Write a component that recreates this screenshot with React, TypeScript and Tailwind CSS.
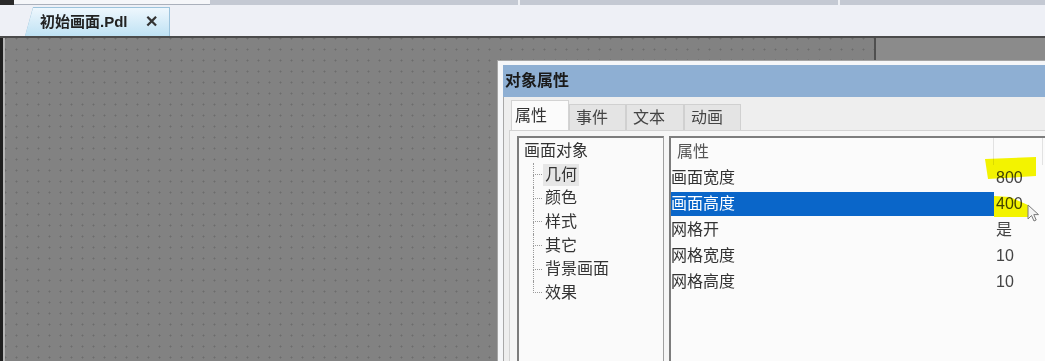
const treeItems = ['几何', '颜色', '样式', '其它', '背景画面', '效果']

const props = [
  { name: '画面宽度', value: '800' },
  { name: '画面高度', value: '400', selected: true },
  { name: '网格开', value: '是' },
  { name: '网格宽度', value: '10' },
  { name: '网格高度', value: '10' },
]

const tabs = [
  { label: '属性', w: 'w-[58px]' },
  { label: '事件', w: 'w-[57px]' },
  { label: '文本', w: 'w-[58px]' },
  { label: '动画', w: 'w-[57px]' },
]

export default function App() {
  return (
    <div className="relative w-[1045px] h-[361px] overflow-hidden flex flex-col bg-[#8a8a8a] font-['Liberation_Sans','Noto_Sans_CJK_SC',sans-serif] text-[#333]">
      {/* top strip */}
      <div className="h-[5px] shrink-0 flex bg-[#c4c9d3]">
        <div className="w-[14px] bg-[#2a2a2a]" />
        <div className="w-[196px] bg-[#f5f6f9] border-b border-[#aab0bb]" />
        <div className="w-[310px] border-r-2 border-[#eef0f4]" />
        <div className="w-[320px] border-r-2 border-[#eef0f4]" />
      </div>

      {/* document tabs */}
      <div className="h-[31px] shrink-0 flex items-end pl-[25px] bg-[#eef0f6]">
        <div className="h-[29px] w-[145px] bg-[#9cc3dc] [clip-path:polygon(8px_0,100%_0,100%_100%,0_100%)]">
          <div className="h-[28px] mt-[1px] mr-[1px] flex items-center pl-[15px] pr-[11px] bg-gradient-to-b from-[#eef7fd] to-[#bfe2f4] [clip-path:polygon(8px_0,100%_0,100%_100%,0_100%)]">
            <span className="text-[15px] font-bold text-[#222]">初始画面.Pdl</span>
            <span className="ml-auto text-[16px] font-bold text-[#333]">✕</span>
          </div>
        </div>
      </div>
      <div className="h-[2px] shrink-0 bg-[#4b4b4b]" />

      {/* canvas */}
      <div className="flex-1 flex">
        <div className="w-[3px] bg-[#1e1e1e]" />
        <div className="w-[2px] bg-[#b4b4b4]" />
        <div className="w-[871px] border-r-2 border-[#4f4f4f] bg-[#828282] bg-[radial-gradient(circle,#6c6c6c_0.8px,transparent_1.2px)] bg-[length:11px_11px] bg-[position:6px_6px]" />
        <div className="flex-1 bg-[#8b8b8b]" />
      </div>

      {/* object properties dialog */}
      <div className="absolute left-[497px] top-[60px] w-[560px] h-[310px] flex flex-col bg-[#f5f6f8] border-l border-t border-[#a5a5a5] pt-[4px] pl-[5px]">
        <div className="h-[32px] shrink-0 flex items-center pl-[2px] bg-[#8eafd3]">
          <span className="text-[16px] font-bold text-[#1a1a1a]">对象属性</span>
        </div>
        <div className="flex-1 flex flex-col bg-[#eeeeee] border-l border-[#a8a8a8] pl-[5px] pt-[3px]">
          <div className="h-[30px] shrink-0 flex items-end pl-[2px]">
            {tabs.map((t, i) => (
              <div
                key={t.label}
                className={`${t.w} flex items-center border border-b-0 text-[16px] ${
                  i === 0
                    ? 'h-[30px] pl-[3px] bg-[#fbfbfb] border-[#d3d3d3] text-[#333]'
                    : 'h-[26px] pl-[6px] bg-[#e4e4e4] border-[#d0d0d0] text-[#444]'
                }`}
              >
                {t.label}
              </div>
            ))}
          </div>
          <div className="flex-1 flex gap-[5px] pl-[7px] pt-[5px] bg-[#f6f6f6] border-l border-t border-[#d3d3d3]">
            {/* tree */}
            <div className="w-[147px] bg-[#fafafa] border-l-2 border-t-2 border-r border-[#7d7d7d] border-r-[#a0a0a0] pt-[1px]">
              <div className="h-[24px] flex items-center pl-[5px] text-[16px]">画面对象</div>
              {treeItems.map((item, i) => (
                <div key={item} className="h-[23.6px] flex items-stretch ml-[14px]">
                  <div className="w-[9px] flex flex-col">
                    <div className="flex-1 border-l border-b border-dotted border-[#9a9a9a]" />
                    <div className={`flex-1 border-l border-dotted ${i === treeItems.length - 1 ? 'border-transparent' : 'border-[#9a9a9a]'}`} />
                  </div>
                  <div className="flex items-center ml-[1px]">
                    <span className={`px-[2px] text-[16px] leading-[22px] ${i === 0 ? 'bg-[#e6e6e6]' : ''}`}>{item}</span>
                  </div>
                </div>
              ))}
            </div>

            {/* property grid */}
            <div className="flex-1 bg-[#fbfbfb] border-l-2 border-t-2 border-[#7d7d7d]">
              <div className="h-[27px] flex">
                <div className="w-[323px] flex items-center pl-[6px] text-[16px] text-[#555] border-r border-[#e2e2e2]">属性</div>
                <div className="w-[49px] border-r border-[#e2e2e2]" />
              </div>
              {props.map(p => (
                <div key={p.name} className="h-[26px] flex">
                  <div
                    className={`w-[323px] flex items-center text-[16px] ${
                      p.selected ? 'bg-[#0a66c9] text-white my-[1px]' : 'text-[#333]'
                    }`}
                  >
                    {p.name}
                  </div>
                  <div className="flex items-center pl-[2px] text-[16px] text-[#444]">{p.value}</div>
                </div>
              ))}
            </div>
          </div>
        </div>
      </div>

      {/* highlighter marks + mouse cursor */}
      <svg className="absolute left-[980px] top-[150px] mix-blend-multiply" width="65" height="80" viewBox="0 0 65 80">
        <polygon points="5,9 56,7 56,26 8,29" fill="#f7f700" />
        <polygon points="14,46 30,47 48,55 48,67 14,67" fill="#f7f700" />
      </svg>
      <svg className="absolute left-[1027px] top-[204px]" width="14" height="20" viewBox="0 0 14 20">
        <path d="M1 1 L1 15 L4.5 11.5 L7 17 L9.2 16 L6.8 10.6 L11.5 10.6 Z" fill="#f4f4f4" stroke="#7a7a7a" strokeWidth="1" />
      </svg>
    </div>
  )
}
